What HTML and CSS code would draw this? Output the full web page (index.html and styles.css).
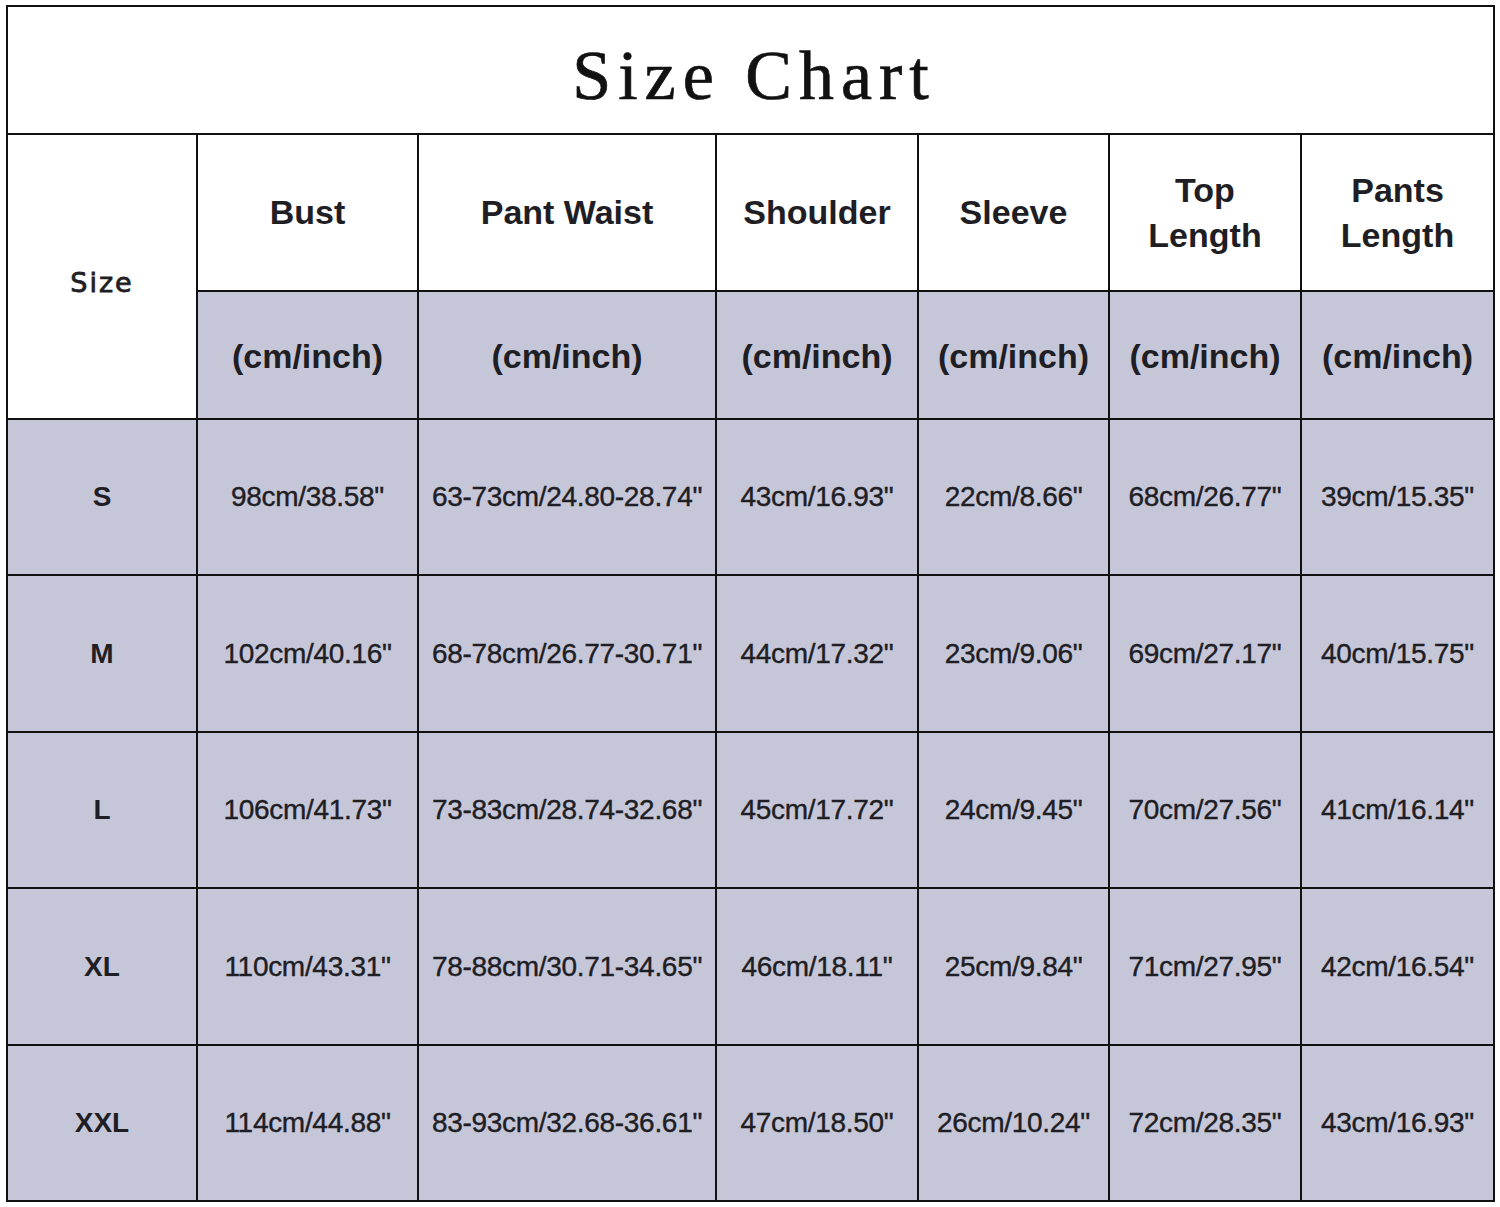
FILE: index.html
```html
<!DOCTYPE html>
<html>
<head>
<meta charset="utf-8">
<link rel="stylesheet" href="styles.css">
</head>
<body>
<div class="chart">
  <div class="cell title">Size Chart</div>

  <div class="cell size-head">Size</div>
  <div class="cell head">Bust</div>
  <div class="cell head">Pant Waist</div>
  <div class="cell head">Shoulder</div>
  <div class="cell head">Sleeve</div>
  <div class="cell head two">Top<br>Length</div>
  <div class="cell head two">Pants<br>Length</div>

  <div class="cell unit">(cm/inch)</div>
  <div class="cell unit">(cm/inch)</div>
  <div class="cell unit">(cm/inch)</div>
  <div class="cell unit">(cm/inch)</div>
  <div class="cell unit">(cm/inch)</div>
  <div class="cell unit">(cm/inch)</div>

  <div class="cell size">S</div>
  <div class="cell data">98cm/38.58"</div>
  <div class="cell data">63-73cm/24.80-28.74"</div>
  <div class="cell data">43cm/16.93"</div>
  <div class="cell data">22cm/8.66"</div>
  <div class="cell data">68cm/26.77"</div>
  <div class="cell data">39cm/15.35"</div>

  <div class="cell size">M</div>
  <div class="cell data">102cm/40.16"</div>
  <div class="cell data">68-78cm/26.77-30.71"</div>
  <div class="cell data">44cm/17.32"</div>
  <div class="cell data">23cm/9.06"</div>
  <div class="cell data">69cm/27.17"</div>
  <div class="cell data">40cm/15.75"</div>

  <div class="cell size">L</div>
  <div class="cell data">106cm/41.73"</div>
  <div class="cell data">73-83cm/28.74-32.68"</div>
  <div class="cell data">45cm/17.72"</div>
  <div class="cell data">24cm/9.45"</div>
  <div class="cell data">70cm/27.56"</div>
  <div class="cell data">41cm/16.14"</div>

  <div class="cell size">XL</div>
  <div class="cell data">110cm/43.31"</div>
  <div class="cell data">78-88cm/30.71-34.65"</div>
  <div class="cell data">46cm/18.11"</div>
  <div class="cell data">25cm/9.84"</div>
  <div class="cell data">71cm/27.95"</div>
  <div class="cell data">42cm/16.54"</div>

  <div class="cell size">XXL</div>
  <div class="cell data">114cm/44.88"</div>
  <div class="cell data">83-93cm/32.68-36.61"</div>
  <div class="cell data">47cm/18.50"</div>
  <div class="cell data">26cm/10.24"</div>
  <div class="cell data">72cm/28.35"</div>
  <div class="cell data">43cm/16.93"</div>
</div>
</body>
</html>
```

FILE: styles.css
```css
html, body {
  margin: 0;
  background: #ffffff;
}

body {
  padding: 5px 6px;
  font-family: "Liberation Sans", Arial, sans-serif;
  color: #1e1e24;
}

.chart {
  display: grid;
  width: 1489px;
  grid-template-columns: 188px 219px 296px 200px 189px 190px 191px;
  grid-template-rows: 126px 155px 126px 154px 155px 154px 155px 154px;
  gap: 2px;
  padding: 2px;
  box-sizing: border-box;
  background: #111111;
}

.cell {
  display: flex;
  align-items: center;
  justify-content: center;
  text-align: center;
  background: #c6c6d9;
}

.title {
  grid-column: 1 / -1;
  background: #ffffff;
  font-family: "Liberation Serif", "Times New Roman", serif;
  font-size: 70px;
  letter-spacing: 7px;
  padding-left: 7px;
  padding-top: 12px;
  color: #111111;
  -webkit-text-stroke: 0.7px #111111;
}

.size-head {
  grid-row: 2 / 4;
  grid-column: 1;
  background: #ffffff;
  font-family: "DejaVu Sans", Verdana, sans-serif;
  font-size: 27px;
  letter-spacing: 2px;
  padding-top: 12px;
  -webkit-text-stroke: 0.8px #1e1e24;
}

.head {
  background: #ffffff;
  font-weight: bold;
  font-size: 34px;
  line-height: 45px;
}

.unit {
  font-weight: bold;
  font-size: 34px;
  padding-top: 2px;
}

.size {
  font-weight: bold;
  font-size: 28px;
}

.data {
  font-size: 28px;
  letter-spacing: -0.3px;
  white-space: nowrap;
  -webkit-text-stroke: 0.4px #1e1e24;
}
```
